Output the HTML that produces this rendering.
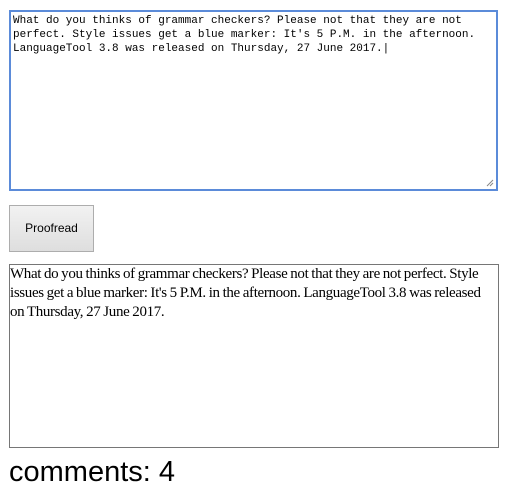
<!DOCTYPE html>
<html><head><style>
body{margin:0;background:#fff;width:510px;height:494px;position:relative;overflow:hidden}
.ta{position:absolute;left:9px;top:10px;border:1px solid #5b8bd9;box-shadow:0 0 0 1px #5b8bd9 inset;padding:3px 3px;box-sizing:border-box;width:489px;height:181px;font:11px/14px "Liberation Mono",monospace;color:#000;white-space:pre}
.btn{position:absolute;left:9px;top:205px;width:85px;height:47px;box-sizing:border-box;border:1px solid #adadad;background:linear-gradient(#f2f2f2,#dedede);font:12px "Liberation Sans",sans-serif;text-align:center;line-height:45px;color:#000}
.out{position:absolute;left:9px;top:264px;width:490px;height:184px;box-sizing:border-box;border:1px solid #767676;font:15px/19px "Liberation Serif",serif;letter-spacing:-0.35px;word-spacing:-0.5px;padding:0;color:#000;white-space:nowrap;overflow:hidden}
.c{position:absolute;left:9px;top:456px;font:29px "Liberation Sans",sans-serif;color:#000}
.grip{position:absolute;left:486px;top:179px;width:8px;height:8px}
</style></head><body>
<div class="ta">What do you thinks of grammar checkers? Please not that they are not
perfect. Style issues get a blue marker: It's 5 P.M. in the afternoon.
LanguageTool 3.8 was released on Thursday, 27 June 2017.|</div>
<svg class="grip" viewBox="0 0 8 8"><path d="M7 1L1 7M7 4L4 7" stroke="#888" stroke-width="1"/></svg>
<div class="btn">Proofread</div>
<div class="out">What do you thinks of grammar checkers? Please not that they are not perfect. Style<br>issues get a blue marker: It's 5 P.M. in the afternoon. LanguageTool 3.8 was released<br>on Thursday, 27 June 2017.</div>
<div class="c">comments: 4</div>
</body></html>
